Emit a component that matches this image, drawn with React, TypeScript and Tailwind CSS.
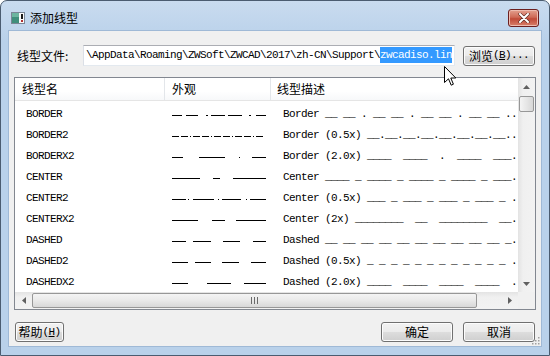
import React from "react";

type Row = { name: string; desc: string; segs: number[][] };

const rows: Row[] = [
  { name: "BORDER", desc: "Border __ __ . __ __ . __ __ . __ __ ..", segs: [[172, 181], [186, 197], [206, 207], [211, 224], [228, 241], [249, 250], [256, 265]] },
  { name: "BORDER2", desc: "Border (0.5x) __.__.__.__.__.__.__.__..", segs: [[172, 178], [181, 187], [190, 190], [193, 199], [202, 208], [211, 211], [214, 220], [223, 229], [232, 232], [235, 241], [244, 250], [253, 253], [256, 262]] },
  { name: "BORDERX2", desc: "Border (2.0x) ____  ____  .  ____  ___.", segs: [[172, 182], [199, 224], [239, 239], [252, 265]] },
  { name: "CENTER", desc: "Center ____ _ ____ _ ____ _ ____ _ ___.", segs: [[172, 199], [213, 219], [233, 265]] },
  { name: "CENTER2", desc: "Center (0.5x) ___ _ ___ _ ___ _ ___ _ .", segs: [[172, 185], [188, 188], [193, 213], [218, 218], [222, 240], [246, 246], [250, 265]] },
  { name: "CENTERX2", desc: "Center (2x) ________  __  ________  __.", segs: [[172, 197], [212, 224], [236, 265]] },
  { name: "DASHED", desc: "Dashed __ __ __ __ __ __ __ __ __ __ _.", segs: [[172, 185], [193, 210], [223, 239], [253, 265]] },
  { name: "DASHED2", desc: "Dashed (0.5x) _ _ _ _ _ _ _ _ _ _ _ _ .", segs: [[172, 187], [195, 210], [222, 238], [251, 265]] },
  { name: "DASHEDX2", desc: "Dashed (2.0x) ____  ____  ____  ____  .", segs: [[172, 187], [207, 230], [244, 265]] },
];

const cjk = "[font-family:'Noto_Sans_CJK_SC',sans-serif]";
const mono = "[font-family:'Liberation_Mono',monospace] text-[11px] tracking-[-0.6px]";
const btn =
  "flex items-center justify-center rounded-[3px] border border-[#707070] bg-[linear-gradient(#f2f2f2_0%,#ebebeb_49%,#dddddd_50%,#cfcfcf_100%)] text-[12px] text-black shadow-[inset_0_0_0_1px_#fcfcfc]";

function Arrow({ dir }: { dir: "up" | "down" | "left" | "right" }) {
  const pts = {
    up: "0,4 3.5,0 7,4",
    down: "0,0 3.5,4 7,0",
    left: "4,0 0,3.5 4,7",
    right: "0,0 4,3.5 0,7",
  }[dir];
  const vert = dir === "up" || dir === "down";
  return (
    <svg width={vert ? 7 : 4} height={vert ? 4 : 7}>
      <polygon points={pts} fill="#606060" />
    </svg>
  );
}

export default function App() {
  return (
    <div className="relative flex h-[356px] w-[550px] flex-col overflow-hidden rounded-t-[7px] border border-[#4b5c70] bg-[linear-gradient(#c9dbef,#b9d1ea_40px,#b9d1ea)]">
      {/* title bar */}
      <div className="flex h-[29px] shrink-0 items-center pl-[10px] pr-[10px]">
        <svg width="14" height="12" className="mt-[4px]">
          <rect x="0.5" y="0.5" width="13" height="11" fill="#fafafa" stroke="#7a8696" />
          <rect x="1" y="1" width="7" height="10" fill="#3f8f7c" />
          <rect x="1" y="1" width="7" height="4" fill="#6cb5a0" />
          <rect x="10" y="2" width="2" height="5" fill="#1a1a1a" />
          <rect x="10" y="8" width="2" height="2" fill="#b03030" />
        </svg>
        <span className={`ml-[5px] mt-[4px] text-[12px] text-black ${cjk}`}>添加线型</span>
        <div className="ml-auto mt-[5px] flex h-[18px] w-[31px] items-center justify-center rounded-[3px] border border-[#6b1f1f] bg-[linear-gradient(#e3a08f,#cf6a57_45%,#c04a38_55%,#d8806a)] shadow-[inset_0_0_0_1px_#eebcb0]">
          <svg width="12" height="10" viewBox="0 0 12 10">
            <path d="M2 1 L10 9 M10 1 L2 9" stroke="#5a2a22" strokeWidth="3.2" strokeLinecap="round" />
            <path d="M2 1 L10 9 M10 1 L2 9" stroke="#ffffff" strokeWidth="2" strokeLinecap="round" />
          </svg>
        </div>
      </div>

      {/* client area */}
      <div className={`relative mx-[7px] flex h-[317px] shrink-0 flex-col border border-[#9fb9d6] bg-[#f0f0f0] px-[5px] pt-[14px] ${cjk}`}>
        <div className="flex h-[21px] items-center">
          <span className="ml-[3px] w-[66px] text-[12px] text-black">线型文件:</span>
          <div className="flex h-[21px] w-[372px] items-center overflow-hidden border border-[#abadb3] border-l-[#dbdfe6] border-r-[#e3e9ef] border-b-[#e3e9ef] bg-white pl-[2px]">
            <span className={`whitespace-pre text-black ${mono}`}>
              \AppData\Roaming\ZWSoft\ZWCAD\2017\zh-CN\Support\
              <span className="bg-[#3399ff] py-[2px] text-white">zwcadiso.lin</span>
            </span>
          </div>
          <div className={`ml-[8px] h-[20px] w-[72px] ${btn}`}>
            <span>浏览</span>
            <span className="[font-family:'Liberation_Mono',monospace] text-[11px] tracking-[-0.6px]">
              (<span className="underline">B</span>)...
            </span>
          </div>
        </div>

        {/* list view */}
        <div className="mt-[11px] flex h-[233px] w-[522px] flex-col border border-[#828790] bg-white">
          <div className="flex min-h-0 flex-1">
            <div className="flex w-[503px] flex-col overflow-hidden">
              <div className="flex h-[23px] shrink-0 border-b border-[#e5e5e5] bg-[linear-gradient(#ffffff,#ffffff_60%,#f7f8fa)] text-[12px] text-black">
                <div className="flex w-[150px] items-center border-r border-[#e3e6ea] pl-[7px]">线型名</div>
                <div className="flex w-[106px] items-center border-r border-[#e3e6ea] pl-[7px]">外观</div>
                <div className="flex flex-1 items-center pl-[6px]">线型描述</div>
              </div>
              <div className="pt-[3px]">
                {rows.map((r) => (
                  <div key={r.name} className="flex h-[21px] items-center text-black">
                    <div className={`w-[150px] pl-[11px] ${mono}`}>{r.name}</div>
                    <div className="w-[106px]">
                      <svg width="106" height="21">
                        {r.segs.map((s, i) => (
                          <rect key={i} x={s[0] - 165} y={11} width={s[1] - s[0] + 1} height={1} fill="#000" />
                        ))}
                      </svg>
                    </div>
                    <div className="w-[247px] pl-[12px]">
                      <div className={`whitespace-pre ${mono}`}>{r.desc}</div>
                    </div>
                  </div>
                ))}
              </div>
            </div>
            {/* vertical scrollbar */}
            <div className="flex w-[17px] flex-col bg-[linear-gradient(90deg,#e3e3e3,#f0f0f0_30%,#f2f2f2)]">
              <div className="flex h-[17px] items-center justify-center">
                <Arrow dir="up" />
              </div>
              <div className="mx-[1px] mt-[1px] h-[16px] rounded-[2px] border border-[#979797] bg-[linear-gradient(90deg,#f4f4f4,#e6e6e6_50%,#d7d7d7)]" />
              <div className="flex-1" />
              <div className="flex h-[17px] items-center justify-center">
                <Arrow dir="down" />
              </div>
            </div>
          </div>
          {/* horizontal scrollbar */}
          <div className="flex h-[17px] shrink-0">
            <div className="flex w-[503px] bg-[linear-gradient(#e3e3e3,#f0f0f0_30%,#f2f2f2)]">
              <div className="flex w-[17px] items-center justify-center">
                <Arrow dir="left" />
              </div>
              <div className="my-[1px] flex w-[445px] items-center justify-center rounded-[2px] border border-[#979797] bg-[linear-gradient(#f4f4f4,#e9e9e9_50%,#d8d8d8)]">
                <svg width="7" height="7">
                  <rect x="0" y="0" width="1" height="7" fill="#6a6a6a" />
                  <rect x="3" y="0" width="1" height="7" fill="#6a6a6a" />
                  <rect x="6" y="0" width="1" height="7" fill="#6a6a6a" />
                </svg>
              </div>
              <div className="flex-1" />
              <div className="flex w-[17px] items-center justify-center">
                <Arrow dir="right" />
              </div>
            </div>
            <div className="w-[17px] bg-[#f0f0f0]" />
          </div>
        </div>

        {/* bottom buttons */}
        <div className="mt-[12px] flex h-[20px] items-center">
          <div className={`ml-[1px] h-[20px] w-[49px] ${btn}`}>
            <span>帮助</span>
            <span className="[font-family:'Liberation_Mono',monospace] text-[11px] tracking-[-0.6px]">
              (<span className="underline">H</span>)
            </span>
          </div>
          <div className={`ml-auto h-[20px] w-[72px] ${btn} border-[#3c7fb1] shadow-[inset_0_0_0_1px_#c0e6fb]`}>确定</div>
          <div className={`ml-[10px] mr-[1px] h-[20px] w-[72px] ${btn}`}>取消</div>
        </div>

        {/* size grip */}
        <svg width="9" height="9" className="absolute bottom-[1px] right-[1px]">
          {[
            [7, 1],
            [4, 4],
            [7, 4],
            [1, 7],
            [4, 7],
            [7, 7],
          ].map(([x, y], i) => (
            <rect key={i} x={x} y={y} width="1.5" height="1.5" fill="#a0a0a0" />
          ))}
        </svg>
      </div>

      {/* mouse pointer */}
      <svg width="13" height="21" className="absolute left-[443px] top-[65px]">
        <path d="M0.5 0.5 L0.5 16.5 L4.5 12.8 L7.2 19.2 L9.4 18.2 L6.8 12 L11.8 12 Z" fill="#fff" stroke="#000" strokeWidth="1" />
      </svg>
    </div>
  );
}
